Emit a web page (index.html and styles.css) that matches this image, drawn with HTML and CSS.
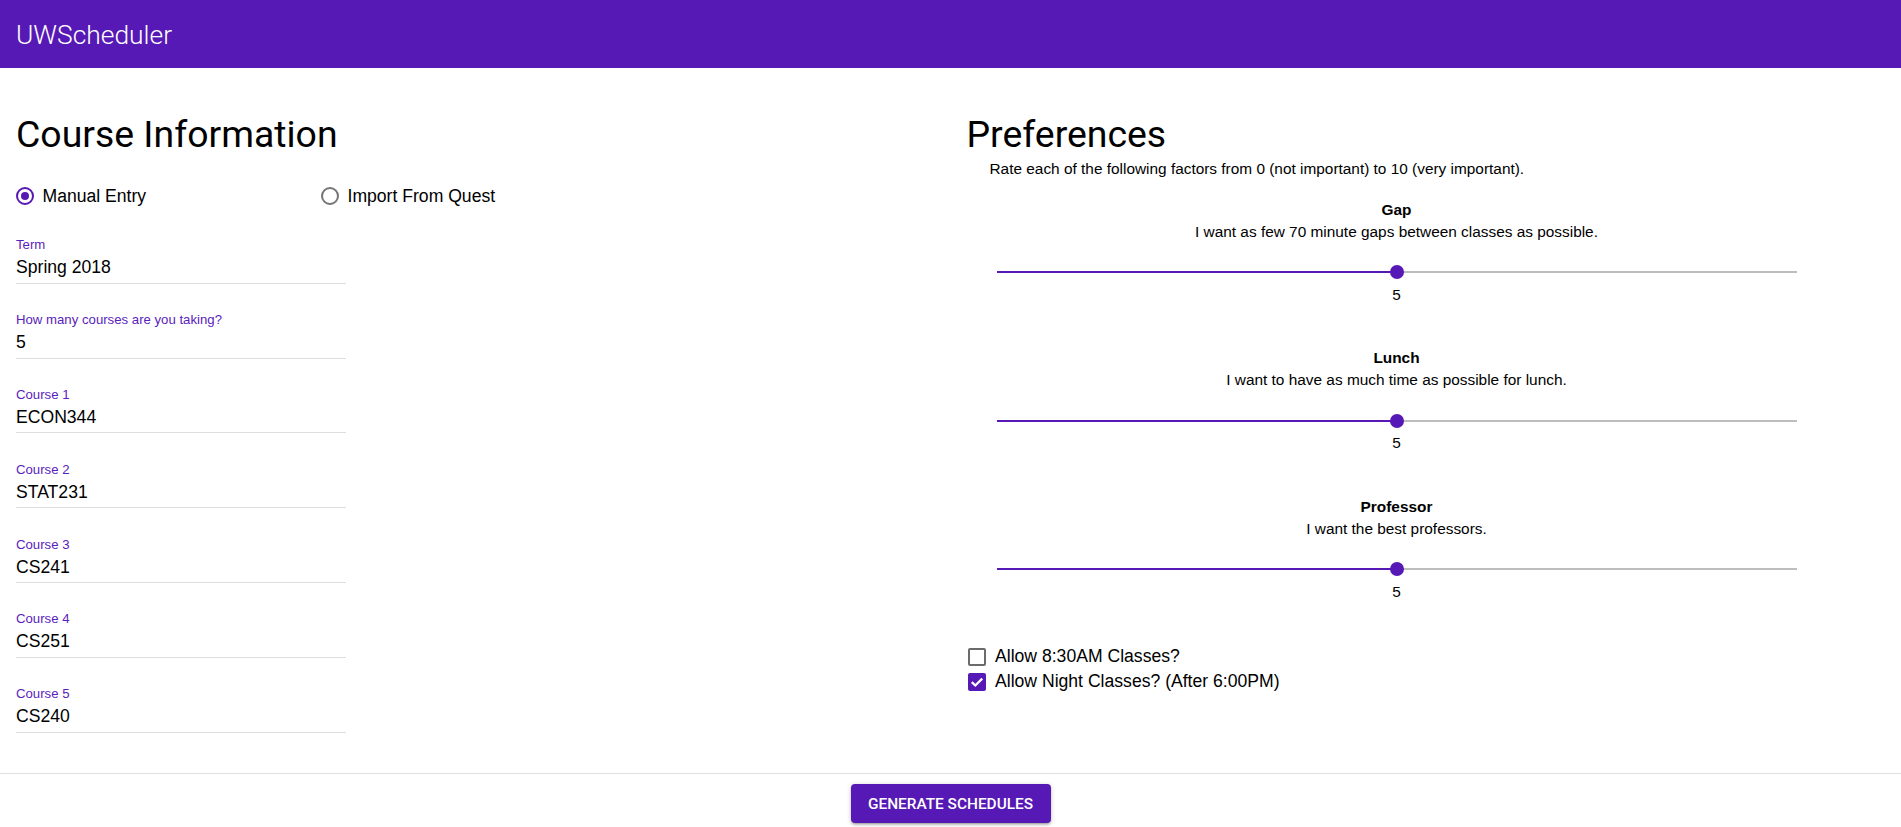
FILE: index.html
```html
<!DOCTYPE html>
<html lang="en">
<head>
<meta charset="utf-8">
<title>UWScheduler</title>
<link rel="stylesheet" href="styles.css">
</head>
<body>
<header class="appbar">
  <h1 class="brand">UWScheduler</h1>
</header>
<main class="content">
  <section class="col">
    <h2 class="heading">Course Information</h2>
    <div class="radio-group">
      <label class="radio-option"><span class="radio checked"></span><span class="radio-text">Manual Entry</span></label>
      <label class="radio-option"><span class="radio"></span><span class="radio-text">Import From Quest</span></label>
    </div>
    <div class="field"><span class="field-label">Term</span><div class="field-input">Spring 2018</div></div>
    <div class="field"><span class="field-label">How many courses are you taking?</span><div class="field-input">5</div></div>
    <div class="field"><span class="field-label">Course 1</span><div class="field-input">ECON344</div></div>
    <div class="field"><span class="field-label">Course 2</span><div class="field-input">STAT231</div></div>
    <div class="field"><span class="field-label">Course 3</span><div class="field-input">CS241</div></div>
    <div class="field"><span class="field-label">Course 4</span><div class="field-input">CS251</div></div>
    <div class="field"><span class="field-label">Course 5</span><div class="field-input">CS240</div></div>
  </section>
  <section class="col">
    <h2 class="heading">Preferences</h2>
    <p class="pref-intro">Rate each of the following factors from 0 (not important) to 10 (very important).</p>
    <div class="pref-list">
      <div class="pref">
        <div class="pref-title">Gap</div>
        <div class="pref-desc">I want as few 70 minute gaps between classes as possible.</div>
        <div class="slider"><div class="track" style="--val:50%"></div><span class="thumb" style="left:50%"></span></div>
        <div class="pref-value">5</div>
      </div>
      <div class="pref">
        <div class="pref-title">Lunch</div>
        <div class="pref-desc">I want to have as much time as possible for lunch.</div>
        <div class="slider"><div class="track" style="--val:50%"></div><span class="thumb" style="left:50%"></span></div>
        <div class="pref-value">5</div>
      </div>
      <div class="pref">
        <div class="pref-title">Professor</div>
        <div class="pref-desc">I want the best professors.</div>
        <div class="slider"><div class="track" style="--val:50%"></div><span class="thumb" style="left:50%"></span></div>
        <div class="pref-value">5</div>
      </div>
    </div>
    <div class="checks">
      <label class="check-row"><span class="checkbox"></span><span>Allow 8:30AM Classes?</span></label>
      <label class="check-row"><span class="checkbox checked"><svg viewBox="0 0 18 18" width="18" height="18"><path d="M3.8 9.1 L7.3 12.5 L14.2 5.6" fill="none" stroke="#fff" stroke-width="2.3"/></svg></span><span>Allow Night Classes? (After 6:00PM)</span></label>
    </div>
  </section>
</main>
<footer class="footer">
  <button class="btn" type="button">Generate Schedules</button>
</footer>
</body>
</html>
```
FILE: styles.css
```css
html, body {
  margin: 0;
  padding: 0;
  height: 100%;
  overflow: hidden;
}
body {
  display: flex;
  flex-direction: column;
  font-family: "Liberation Sans", Arial, sans-serif;
  color: #000;
  background: #fff;
}
.appbar {
  height: 68px;
  flex: none;
  background: #5719b5;
  display: flex;
  align-items: center;
  padding: 2px 16px 0;
  box-sizing: border-box;
}
.brand {
  margin: 0;
  font-family: Roboto, sans-serif;
  font-weight: 300;
  font-size: 26.4px;
  color: #fff;
  line-height: 32px;
}
.content {
  flex: 1;
  display: grid;
  grid-template-columns: 1fr 1fr;
  padding-top: 44px;
}
.col {
  padding: 0 16px;
}
.heading {
  margin: 0;
  font-family: Roboto, sans-serif;
  font-weight: 400;
  font-size: 37.4px;
  line-height: 44px;
  color: #000;
}
.radio-group {
  display: flex;
  margin-top: 27.7px;
}
.radio-option {
  width: 305px;
  display: flex;
  align-items: center;
  height: 24px;
  font-size: 17.6px;
  line-height: 24px;
}
.radio {
  width: 18px;
  height: 18px;
  box-sizing: border-box;
  border: 2px solid #757575;
  border-radius: 50%;
  margin-right: 8.5px;
  display: flex;
  align-items: center;
  justify-content: center;
}
.radio.checked {
  border-color: #5719b5;
}
.radio.checked::after {
  content: "";
  width: 8px;
  height: 8px;
  border-radius: 50%;
  background: #5719b5;
}
.field {
  width: 330px;
  margin-top: 26.8px;
  border-bottom: 1px solid #dedede;
}
.radio-group + .field {
  margin-top: 28.2px;
}
.field-label {
  display: block;
  font-size: 13.2px;
  line-height: 16px;
  padding-top: 1.5px;
  color: #5a22bd;
}
.field-input {
  font-size: 17.6px;
  line-height: 22px;
  padding: 3px 0 4.5px;
}
.pref-intro {
  margin: 3.1px 0 0 23px;
  font-size: 15.4px;
  line-height: 20px;
}
.pref-list {
  width: 860px;
  margin-top: 19.7px;
}
.pref {
  text-align: center;
  font-size: 15.4px;
  line-height: 22px;
  margin-bottom: 41.5px;
}
.pref-title {
  font-weight: bold;
}
.slider {
  position: relative;
  width: 800px;
  height: 14px;
  margin: 22.3px auto 0;
  display: flex;
  align-items: center;
}
.track {
  width: 100%;
  height: 2px;
  background: linear-gradient(to right, #5719b5 var(--val), #bdbdbd var(--val));
}
.thumb {
  position: absolute;
  top: 0;
  width: 14px;
  height: 14px;
  margin-left: -7px;
  border-radius: 50%;
  background: #5719b5;
}
.pref-value {
  margin-top: 4.7px;
}
.checks {
  margin-top: 2px;
}
.check-row {
  display: flex;
  align-items: center;
  height: 25px;
  font-size: 17.6px;
  line-height: 25px;
}
.checkbox {
  width: 18px;
  height: 18px;
  box-sizing: border-box;
  border: 2px solid #6b6b6b;
  border-radius: 2px;
  margin: 0 9px 0 1.5px;
  display: flex;
}
.checkbox.checked {
  border: none;
  background: #5719b5;
}
.footer {
  flex: none;
  border-top: 1px solid #e0e0e0;
  padding: 10px 0 4px;
  display: flex;
  justify-content: center;
}
.btn {
  height: 39px;
  width: 200px;
  border: none;
  border-radius: 4px;
  background: #5719b5;
  color: #fff;
  font-family: Roboto, sans-serif;
  font-weight: 500;
  font-size: 15.4px;
  letter-spacing: 0;
  text-transform: uppercase;
  box-shadow: 0 1px 5px rgba(0,0,0,0.2), 0 2px 2px rgba(0,0,0,0.14), 0 3px 1px -2px rgba(0,0,0,0.12);
  cursor: pointer;
}
```
